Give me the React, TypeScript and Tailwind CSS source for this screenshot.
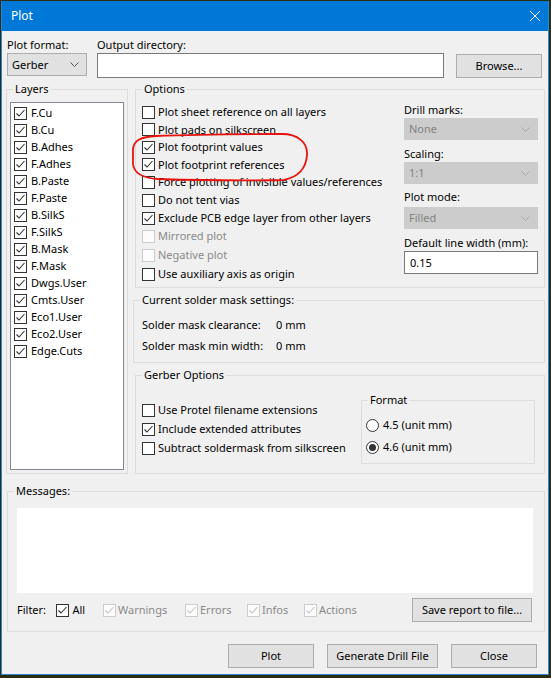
import type { ReactNode } from 'react'

const LAYERS = [
  'F.Cu', 'B.Cu', 'B.Adhes', 'F.Adhes', 'B.Paste', 'F.Paste', 'B.SilkS', 'F.SilkS',
  'B.Mask', 'F.Mask', 'Dwgs.User', 'Cmts.User', 'Eco1.User', 'Eco2.User', 'Edge.Cuts',
]

// row heights follow the uneven spacing of the native dialog
const OPTIONS = [
  { label: 'Plot sheet reference on all layers', checked: false, disabled: false, h: 'h-[17.5px]' },
  { label: 'Plot pads on silkscreen', checked: false, disabled: false, h: 'h-[17.5px]' },
  { label: 'Plot footprint values', checked: true, disabled: false, h: 'h-[17.5px]' },
  { label: 'Plot footprint references', checked: true, disabled: false, h: 'h-[17.5px]' },
  { label: 'Force plotting of invisible values/references', checked: false, disabled: false, h: 'h-[17.5px]' },
  { label: 'Do not tent vias', checked: false, disabled: false, h: 'h-[19px]' },
  { label: 'Exclude PCB edge layer from other layers', checked: true, disabled: false, h: 'h-[17px]' },
  { label: 'Mirrored plot', checked: false, disabled: true, h: 'h-[19px]' },
  { label: 'Negative plot', checked: false, disabled: true, h: 'h-[19px]' },
  { label: 'Use auxiliary axis as origin', checked: false, disabled: false, h: 'h-[19px]' },
]

const GERBER = [
  { label: 'Use Protel filename extensions', checked: false },
  { label: 'Include extended attributes', checked: true },
  { label: 'Subtract soldermask from silkscreen', checked: false },
]

function Box({ checked, disabled }: { checked?: boolean; disabled?: boolean }) {
  return (
    <span
      className={`flex h-[13px] w-[13px] shrink-0 items-center justify-center border ${
        disabled ? 'border-[#cccccc] bg-[#fcfcfc]' : 'border-[#333333] bg-white'
      }`}
    >
      {checked && (
        <svg viewBox="0 0 11 11" className="h-[11px] w-[11px]">
          <path
            d="M1.5 5.5 L4 8 L9.5 2"
            fill="none"
            stroke={disabled ? '#c4c4c4' : '#333333'}
            strokeWidth="1.1"
          />
        </svg>
      )}
    </span>
  )
}

function Radio({ checked }: { checked?: boolean }) {
  return (
    <span className="flex h-[13px] w-[13px] shrink-0 items-center justify-center rounded-full border border-[#333333] bg-white">
      {checked && <span className="h-[7px] w-[7px] rounded-full bg-[#333333]" />}
    </span>
  )
}

function Chevron({ color }: { color: string }) {
  return (
    <svg viewBox="0 0 9 5" className="h-[5px] w-[9px]">
      <path d="M0.5 0.5 L4.5 4.5 L8.5 0.5" fill="none" stroke={color} strokeWidth="1" />
    </svg>
  )
}

function Select({ value, disabled, className = '' }: { value: string; disabled?: boolean; className?: string }) {
  return (
    <div
      className={`flex items-center justify-between border pl-[4px] pr-[7px] ${
        disabled ? 'border-[#cccccc] bg-[#cccccc] text-[#838383]' : 'border-[#adadad] bg-[#e1e1e1]'
      } ${className}`}
    >
      <span>{value}</span>
      <Chevron color={disabled ? '#a9a9a9' : '#555555'} />
    </div>
  )
}

function Button({ children, className = '' }: { children: ReactNode; className?: string }) {
  return (
    <div className={`flex h-[24px] items-center justify-center border border-[#adadad] bg-[#e1e1e1] ${className}`}>
      {children}
    </div>
  )
}

function Group({ title, className = '', children }: { title: string; className?: string; children: ReactNode }) {
  return (
    <fieldset className={`border border-[#dcdcdc] ${className}`}>
      <legend className="ml-[6px] px-[2px] leading-[16px]">{title}</legend>
      {children}
    </fieldset>
  )
}

export default function App() {
  return (
    <div
      className="relative h-[678px] w-[551px] overflow-hidden bg-[#2c2c10] text-[11px] leading-[16px] text-black"
      style={{ fontFamily: '"Noto Sans", "Segoe UI", sans-serif' }}
    >
      <div className="ml-[1px] mt-[1px] flex h-[674px] w-[548px] flex-col border-x border-b border-[#2a86d8] bg-[#f0f0f0]">
        {/* title bar */}
        <div className="flex h-[30px] shrink-0 items-center justify-between bg-[#0078d7] pl-[9px] pr-[8px] text-[12px] text-white">
          <span>Plot</span>
          <svg viewBox="0 0 10 10" className="h-[10px] w-[10px]">
            <path d="M0 0 L10 10 M10 0 L0 10" stroke="white" strokeWidth="1" />
          </svg>
        </div>

        <div className="flex flex-1 flex-col pl-[4px] pr-[3px] pt-[6px]">
          {/* format / output directory */}
          <div className="flex items-start pl-[1px]">
            <div className="flex w-[80px] flex-col">
              <span className="h-[16px]">Plot format:</span>
              <Select value="Gerber" className="h-[23px]" />
            </div>
            <div className="ml-[10px] flex w-[347px] flex-col">
              <span className="h-[16px]">Output directory:</span>
              <div className="h-[25px] border border-[#7a7a7a] bg-white" />
            </div>
            <Button className="ml-[12px] mt-[17px] w-[86px]">Browse...</Button>
          </div>

          {/* layers + options */}
          <div className="mt-[3px] flex items-start">
            <Group title="Layers" className="h-[393px] w-[123px]">
              <div className="ml-[3px] mt-[5px] h-[368px] w-[114px] border border-[#828790] bg-white pl-[3px] pt-[1.5px]">
                {LAYERS.map((l) => (
                  <div key={l} className="flex h-[17px] items-center gap-[4px]">
                    <Box checked />
                    <span>{l}</span>
                  </div>
                ))}
              </div>
            </Group>

            <div className="ml-[7px] flex w-[410px] flex-col">
              <Group title="Options" className="h-[207px]">
                <div className="flex">
                  <div className="flex flex-1 flex-col pl-[6px] pt-[6.25px]">
                    {OPTIONS.map((o) => (
                      <div key={o.label} className={`flex items-center gap-[3px] ${o.h}`}>
                        <Box checked={o.checked} disabled={o.disabled} />
                        <span className={o.disabled ? 'text-[#8a8a8a]' : ''}>{o.label}</span>
                      </div>
                    ))}
                  </div>
                  <div className="mr-[6px] mt-[5px] flex w-[134px] flex-col">
                    <span className="h-[16px]">Drill marks:</span>
                    <Select value="None" disabled className="h-[22px]" />
                    <span className="mt-[6px] h-[16px]">Scaling:</span>
                    <Select value="1:1" disabled className="h-[22px]" />
                    <span className="mt-[5px] h-[16px]">Plot mode:</span>
                    <Select value="Filled" disabled className="mt-[2px] h-[22px]" />
                    <span className="mt-[6px] h-[16px]">Default line width (mm):</span>
                    <div className="flex h-[23px] items-center border border-[#7a7a7a] bg-white pl-[5px]">0.15</div>
                  </div>
                </div>
              </Group>

              <Group title="Current solder mask settings:" className="-ml-[2px] mt-[4px] h-[71px] w-[412px]">
                <div className="flex flex-col pl-[8px] pt-[6.5px]">
                  <div className="flex h-[21px] items-center">
                    <span className="w-[134px]">Solder mask clearance:</span>
                    <span>0 mm</span>
                  </div>
                  <div className="flex h-[21px] items-center">
                    <span className="w-[134px]">Solder mask min width:</span>
                    <span>0 mm</span>
                  </div>
                </div>
              </Group>

              <Group title="Gerber Options" className="mt-[4px] h-[107px]">
                <div className="flex">
                  <div className="flex w-[225px] flex-col pl-[6px] pt-[17.5px]">
                    {GERBER.map((g) => (
                      <div key={g.label} className="flex h-[19px] items-center gap-[3px]">
                        <Box checked={g.checked} />
                        <span className="whitespace-nowrap">{g.label}</span>
                      </div>
                    ))}
                  </div>
                  <Group title="Format" className="mt-[9px] h-[72px] w-[174px]">
                    <div className="flex flex-col pl-[4px] pt-[6px]">
                      <div className="flex h-[22px] items-center gap-[4px]">
                        <Radio />
                        <span>4.5 (unit mm)</span>
                      </div>
                      <div className="flex h-[22px] items-center gap-[4px]">
                        <Radio checked />
                        <span>4.6 (unit mm)</span>
                      </div>
                    </div>
                  </Group>
                </div>
              </Group>
            </div>
          </div>

          {/* messages */}
          <Group title="Messages:" className="ml-[1px] mt-[9px] h-[149px] w-[538px]">
            <div className="ml-[9px] mt-[9px] h-[85px] w-[516px] bg-white" />
            <div className="ml-[9px] mt-[5px] flex h-[24px] w-[515px] items-center">
              <span className="w-[39px]">Filter:</span>
              <div className="flex w-[46.5px] items-center gap-[3.5px]">
                <Box checked />
                <span>All</span>
              </div>
              <div className="flex w-[82px] items-center gap-[2.5px] text-[#8a8a8a]">
                <Box checked disabled />
                <span>Warnings</span>
              </div>
              <div className="flex w-[62px] items-center gap-[2.5px] text-[#8a8a8a]">
                <Box checked disabled />
                <span>Errors</span>
              </div>
              <div className="flex w-[57px] items-center gap-[2.5px] text-[#8a8a8a]">
                <Box checked disabled />
                <span>Infos</span>
              </div>
              <div className="flex items-center gap-[2.5px] text-[#8a8a8a]">
                <Box checked disabled />
                <span>Actions</span>
              </div>
              <Button className="ml-auto w-[120px]">Save report to file...</Button>
            </div>
          </Group>

          {/* dialog buttons */}
          <div className="mt-[12px] flex justify-end gap-[13px] pr-[8px]">
            <Button className="w-[86px]">Plot</Button>
            <Button className="w-[111px]">Generate Drill File</Button>
            <Button className="w-[86px]">Close</Button>
          </div>
        </div>
      </div>

      {/* hand-drawn red mark around the footprint options */}
      <svg className="pointer-events-none absolute left-0 top-0" width="551" height="678">
        <path
          d="M282 134 C297 134 308 142 307 155 C306 169 298 177 284 180 C240 181 190 180 158 179 C143 178 134 174 133 164 L133 149 C134 140 141 137 156 136 C200 134 250 134 282 134"
          fill="none"
          stroke="#e8120c"
          strokeWidth="1.8"
        />
      </svg>
    </div>
  )
}
